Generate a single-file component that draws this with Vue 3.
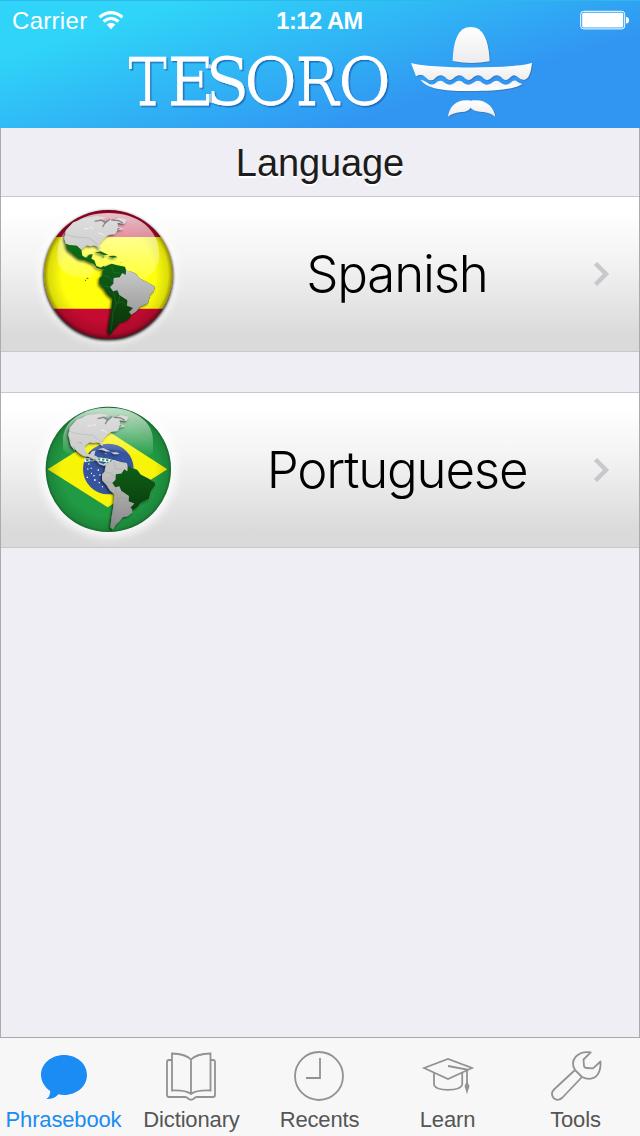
<script setup>
const rows = [
  { name: 'Spanish', kind: 'es', box: '0 6 480 462' },
  { name: 'Portuguese', kind: 'br', box: '0 9 480 462' },
]
const tabs = ['Phrasebook', 'Dictionary', 'Recents', 'Learn', 'Tools']
const north = 'M103 130L108 106L130 82L145 77L160 69L200 63L226 67L214 79L224 86L238 72L250 76L266 68L291 73L284 86L262 83L264 96L283 102L262 106L255 117L237 119L224 128L206 149L212 160L207 163L202 154L190 151L182 154L170 151L158 160L152 166L142 152L118 151L108 146Z'
const central = 'M107 146L118 150L140 152L154 164L157 182L169 189L177 179L188 177L184 191L193 196L199 213L213 218L222 212L229 221L214 223L200 219L190 206L165 196L148 193L135 183L124 173L119 158L123 177L111 161Z'
const islands = 'M194 173L212 169L235 180L220 180L209 175ZM235 183L254 182L263 187L246 188ZM215 185L222 185L222 188ZM272 202L275 203L273 204Z'
const south = 'M227 214L245 206L262 211L285 215L289 228L304 230L318 236L328 250L352 262L375 275L372 287L361 300L354 325L330 336L318 350L300 358L303 366L288 378L272 381L262 394L250 405L242 419L234 412L237 385L243 350L247 311L232 298L222 282L208 268L208 250L216 242L218 228Z'
const brazil = 'M288 224L318 236L328 250L352 262L375 275L372 287L361 300L354 325L330 336L318 350L304 359L297 351L309 339L291 332L292 316L268 300L262 286L249 289L240 276L250 266L251 249L269 247L277 234L287 240Z'
const borders = 'M106 118L130 125L180 130L203 149M218 241L236 246L251 264M209 266L221 273L238 276M249 289L254 306L258 330L249 352L244 407M258 325L278 321L292 335M270 300L264 323M245 213L250 232L270 234'
</script>

<template>
  <main class="screen">
    <header class="top">
      <div class="status">
        <div class="signal">
          <span class="carrier">Carrier</span>
          <svg class="wifi" viewBox="0 0 26 20" width="26" height="20">
            <g fill="none" stroke="#fff" stroke-width="3.2">
              <path d="M1.6 7.2Q13 -2 24.4 7.2" /><path d="M5.5 11.5Q13 5.3 20.5 11.5" />
            </g>
            <path d="M8.6 14.6Q13 11 17.4 14.6L13 19.2Z" fill="#fff" />
          </svg>
        </div>
        <span class="time">1:12 AM</span>
        <svg class="battery" viewBox="0 0 50 20" width="50" height="20">
          <rect x=".7" y="1.3" width="44" height="17.6" rx="3" fill="none" stroke="#fff" />
          <rect x="2.2" y="2.8" width="41" height="14.6" rx="1.5" fill="#fff" />
          <path d="M46 7Q49 7 49 10.2Q49 13.5 46 13.5Z" fill="#fff" />
        </svg>
      </div>
      <div class="brand">
        <svg class="word" viewBox="0 0 270 70" width="270" height="70">
          <defs>
            <filter id="thin" x="-5%" y="-10%" width="110%" height="120%">
              <feMorphology in="SourceGraphic" operator="erode" radius="1 0" result="t" />
              <feDropShadow in="t" dx="1.5" dy="1.5" stdDeviation=".5" flood-color="#1556a8" flood-opacity=".7" />
            </filter>
          </defs>
          <text y="60" filter="url(#thin)"><tspan x="2">T</tspan><tspan class="wide" x="41 79 117.8">ESO</tspan><tspan x="169">R</tspan><tspan class="wide" x="211.8">O</tspan></text>
        </svg>
        <svg class="hat" viewBox="0 0 420 315" width="140" height="105">
          <defs>
            <linearGradient id="felt" x1="0" y1="0" x2="0" y2="1">
              <stop offset="0" stop-color="#fff" /><stop offset="1" stop-color="#ececee" />
            </linearGradient>
            <linearGradient id="felt2" x1="0" y1="0" x2="0" y2="1">
              <stop offset="0" stop-color="#f2f2f4" /><stop offset="1" stop-color="#fff" />
            </linearGradient>
          </defs>
          <path fill="url(#felt)" d="M158 123C160 60 175 21 212 21C250 21 266 60 269 124Q212 135 158 123Z" />
          <path fill="url(#felt)" d="M33 129C90 146 330 148 396 129C393 157 387 177 372 180Q362 180 353 171Q342 160 332 171Q317 190 303 171Q290 160 277 171Q261 190 247 171Q235 160 221 171Q206 190 191 171Q178 160 165 171Q149 190 135 171Q122 160 109 171Q94 190 78 173Q65 158 48 169Z" />
          <path fill="url(#felt2)" d="M61 179Q72 180 82 188Q95 199 107 189Q121 175 135 189Q149 200 163 189Q178 175 191 189Q205 200 219 189Q235 175 247 189Q261 200 275 189Q290 175 303 189Q318 200 331 189Q343 176 353 186Q360 190 367 192C340 211 270 213 212 213C145 213 85 210 61 179Z" />
          <path fill="url(#felt)" d="M144 290C148 258 172 235 212 242C255 234 283 260 286 291C275 280 262 277 240 275Q220 273 212 263Q205 275 185 276Q160 278 144 290Z" />
        </svg>
      </div>
    </header>

    <section class="content">
      <h1>Language</h1>
      <article v-for="r in rows" :key="r.kind" class="row">
        <svg class="globe" :viewBox="r.box" width="160" height="154">
          <defs>
            <clipPath :id="'c' + r.kind"><circle cx="235" cy="238" :r="r.kind === 'es' ? 193 : 188" /></clipPath>
            <radialGradient :id="'s' + r.kind">
              <stop offset=".72" stop-color="#000" stop-opacity="0" />
              <stop offset=".93" stop-color="#000" stop-opacity=".14" />
              <stop offset="1" stop-color="#000" stop-opacity=".45" />
            </radialGradient>
            <linearGradient :id="'g' + r.kind" x1="0" y1="0" x2="0" y2="1">
              <stop offset="0" stop-color="#fff" stop-opacity=".75" />
              <stop offset="1" stop-color="#fff" :stop-opacity="r.kind === 'es' ? .12 : .02" />
            </linearGradient>
            <linearGradient :id="'l' + r.kind" gradientUnits="userSpaceOnUse" x1="0" y1="60" x2="0" y2="420">
              <stop offset="0" stop-color="#dedede" /><stop offset=".5" stop-color="#c4c4c4" /><stop offset="1" stop-color="#858585" />
            </linearGradient>
            <linearGradient :id="'n' + r.kind" gradientUnits="userSpaceOnUse" x1="0" y1="140" x2="0" y2="420">
              <stop offset="0" stop-color="#0f7018" /><stop offset=".5" stop-color="#0d5213" /><stop offset="1" stop-color="#052f08" />
            </linearGradient>
            <filter :id="'b' + r.kind" x="-20%" y="-20%" width="140%" height="140%"><feGaussianBlur stdDeviation="5" /></filter>
            <filter :id="'w' + r.kind" x="-20%" y="-20%" width="140%" height="140%"><feGaussianBlur stdDeviation="13" /></filter>
            <filter :id="'d' + r.kind"><feDropShadow dx="-4" dy="4" stdDeviation="3" flood-color="#000" flood-opacity=".65" /></filter>
          </defs>
          <circle cx="235" cy="238" r="206" fill="#fff" opacity=".8" :filter="`url(#w${r.kind})`" />
          <circle v-if="r.kind === 'es'" cx="235" cy="242" r="194" fill="#000" :filter="`url(#b${r.kind})`" />
          <g :clip-path="`url(#c${r.kind})`">
            <template v-if="r.kind === 'es'">
              <path d="M0 0H480V480H0Z" fill="#c60b32" />
              <path d="M0 126H480V341H0Z" fill="#ffff0c" />
            </template>
            <template v-else>
              <path d="M0 0H480V480H0Z" fill="#219b43" />
              <path d="M53 238L235 124L412 238L233 352Z" fill="#f8f408" />
              <circle cx="235" cy="237" r="76" fill="#36549f" />
              <path d="M163 211Q215 201 270 222" fill="none" stroke="#fff" stroke-width="11" />
              <path d="M168 211Q215 203 250 216" fill="none" stroke="#219b43" stroke-width="6" stroke-dasharray="7 5" />
              <path d="M175 222h3M172 237h3M183 250h3M170 262h4M190 257h4M203 240h4M208 255h4M192 270h5M206 278h4M182 235h3M216 290h3" stroke="#fff" stroke-width="4" />
            </template>
            <circle cx="235" cy="238" r="193" :fill="`url(#s${r.kind})`" />
            <path v-if="r.kind === 'es'" d="M82 182C82 100 150 54 235 54C322 54 388 100 388 182C388 225 350 258 310 268C290 230 200 200 180 250C110 250 82 225 82 182Z" :fill="`url(#g${r.kind})`" />
            <path v-else d="M99 150C99 92 160 53 235 53C310 53 369 92 369 150V185C350 220 300 180 235 178C180 178 115 210 99 178Z" :fill="`url(#g${r.kind})`" />
            <g :transform="r.kind === 'br' ? 'matrix(.963 0 0 .98 15.8 8.4)' : undefined">
              <g :filter="`url(#d${r.kind})`">
                <path :d="north" :fill="`url(#l${r.kind})`" />
                <path :d="central + islands + south" :fill="`url(#${r.kind === 'es' ? 'n' : 'l'}${r.kind})`" />
              </g>
              <path :d="brazil" :fill="`url(#${r.kind === 'es' ? 'l' : 'n'}${r.kind})`" />
              <path :d="borders" fill="none" :stroke="r.kind === 'es' ? '#5a9a5c' : '#7c927c'" stroke-width="1.5" stroke-opacity=".5" />
              <path d="M194 79L214 75L226 82L218 96M226 84L240 72M244 75L266 77L279 84M262 104L268 99" fill="none" stroke="#8a8486" stroke-width="4" />
              <path d="M162 102l14-3M180 96l10 5M204 114l12 2l8 7" fill="none" stroke="#fff" stroke-width="2" />
              <path v-if="r.kind === 'es'" d="M170 250h5M165 256h3" stroke="#49610c" stroke-width="3" />
            </g>
          </g>
        </svg>
        <span class="name">{{ r.name }}</span>
        <svg class="chev" viewBox="0 0 18 26" width="18" height="26"><path d="M2.5 2.5L13 13L2.5 23.5" fill="none" stroke="#c7c7cc" stroke-width="4.4" /></svg>
      </article>
    </section>

    <nav class="tabs">
      <a v-for="(t, i) in tabs" :key="t" :class="{ on: i === 0 }">
        <svg viewBox="0 0 52 52" width="52" height="52" fill="none" stroke="#929292" stroke-width="1.8">
          <path v-if="i === 0" fill="#1b8cf3" stroke="none" d="M26 5C39 5 49 14 49 25S39 45 26 45Q23 45 20.500 44.300C17 48 13 49.300 8.300 49Q12.500 46 12.200 41C6.500 37 3 31 3 25C3 14 13 5 26 5Z" />
          <g v-else-if="i === 1">
            <path d="M6 10H3Q1 10 1 12V45Q1 47 3 47H19Q21 47 22 48.500Q25 51 28 48.500Q29 47 31 47H47Q49 47 49 45V12Q49 10 47 10H44.500" />
            <path d="M25 44V9.500Q20 4 6 3.500V40.500Q20 40 25 44Q30 40 44.500 40.500V3.500Q30 4 25 9.500" />
          </g>
          <g v-else-if="i === 2"><circle cx="25" cy="26" r="24" /><path d="M12 28H26V8" /></g>
          <g v-else-if="i === 3">
            <path d="M2 18L26 9L50 18L26 29Z" /><path d="M12 23V35Q14 39.800 26 39.800T40.200 35V23" />
            <path d="M26 16L45 19.500V35" /><path d="M45 33L43.500 36L45 41L46.500 36Z" fill="#929292" />
          </g>
          <g v-else stroke-linejoin="round">
            <path d="M40.700 2.300L33.500 9.500L34 16Q34.500 18 37 18L43 18.300L50.500 11.500C51 22 47 28.800 39.300 28.800Q35.500 28.800 32 27L12.500 47.500Q8 52 3.500 48Q0 43 4.500 39L25 20C19 10 28 .5 40.700 2.300Z" />
            <path d="M25 20L32 27" />
          </g>
        </svg>
        <span>{{ t }}</span>
      </a>
    </nav>
  </main>
</template>

<style>
body { margin: 0; }
</style>

<style scoped>
.screen { width: 640px; height: 1136px; display: flex; flex-direction: column; background: #efeef4; font-family: "Liberation Sans", Arial, sans-serif; overflow: hidden; }
.top { height: 128px; flex: none; box-sizing: border-box; background: linear-gradient(163deg, #2fd4f8 18%, #3195f2 72%); box-shadow: inset 0 1px 0 #2cb8e8; color: #fff; }
.status { height: 40px; display: grid; grid-template-columns: 1fr auto 1fr; align-items: center; padding: 0 11px 0 10px; box-sizing: border-box; font-size: 24px; }
.signal { display: flex; align-items: center; padding-left: 2px; }
.carrier { letter-spacing: .3px; padding-top: 2px; width: 76px; }
.wifi { margin-left: 10px; }
.time { font-weight: 700; font-size: 23.500px; white-space: nowrap; padding-top: 2px; letter-spacing: -.4px; }
.battery { justify-self: end; margin-right: -1px; }
.brand { display: flex; margin-top: -20px; padding-left: 126px; height: 105px; }
.word { margin-top: 25px; flex: none; overflow: visible; }
.word text { font-family: "DejaVu Serif Condensed", "DejaVu Serif", serif; font-stretch: condensed; font-size: 65.500px; fill: #fff; stroke: #fff; stroke-width: .9px; }
.word .wide { font-family: "DejaVu Serif", serif; font-stretch: normal; }
.hat { margin-left: 4px; flex: none; filter: drop-shadow(1.500px 1.500px .5px rgba(60, 90, 140, .45)); }
.content { flex: 1; border: 1px solid #acacb0; border-top: 0; border-bottom: 0; }
h1 { margin: 0; height: 68px; line-height: 71px; text-align: center; font-weight: 400; font-size: 38px; color: #1c1c1c; text-shadow: 0 2px 0 #fff; letter-spacing: -.1px; }
.row { height: 154px; border: 1px solid #c8c7cc; border-left: 0; border-right: 0; margin-bottom: 40px; display: flex; align-items: center; background: linear-gradient(#fff 9%, #f4f4f4 40%, #dadada 90%); }
.globe { margin-left: 29px; flex: none; }
.name { flex: 1; text-align: center; font-family: Inter, "Liberation Sans", sans-serif; font-weight: 300; font-size: 51px; letter-spacing: -1.200px; color: #000; padding-left: 11px; margin-top: -1px; white-space: nowrap; }
.chev { flex: none; margin-right: 28px; }
.tabs { height: 99px; box-sizing: border-box; flex: none; border-top: 1px solid #a9a9ad; background: #f7f7f7; display: grid; grid-template-columns: repeat(5, 1fr); }
.tabs a { display: flex; flex-direction: column; align-items: center; padding-top: 12px; color: #555; font-size: 22px; letter-spacing: -.15px; }
.tabs span { line-height: 26px; margin-top: 5px; margin-left: -1px; }
.tabs .on { color: #1b8cf3; }
</style>
